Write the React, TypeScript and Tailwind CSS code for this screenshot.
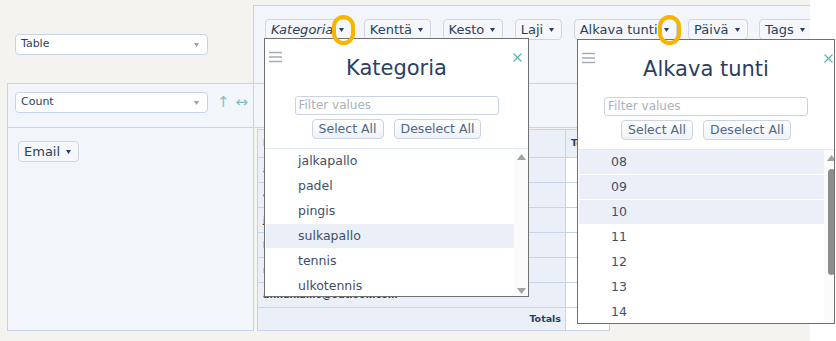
import React from 'react';

const CATEGORIES = ['jalkapallo', 'padel', 'pingis', 'sulkapallo', 'tennis', 'ulkotennis', 'ulkopadel'];
const HOURS = ['08', '09', '10', '11', '12', '13', '14', '15', '16'];
const EMAILS = [
    'aleksi.nieminen@gmail.com',
    'emma.korhonen@gmail.com',
    'juha.makinen@hotmail.com',
    'laura.heikkinen@gmail.com',
    'mikko.laine@outlook.com',
    'anna.kallio@outlook.com',
];
const ATTRS = ['Kenttä', 'Kesto', 'Laji'];

const Tri = ({ className = '', color = '#2a3f5f' }: { className?: string; color?: string }) => (
    <svg width="5" height="4" viewBox="0 0 5 4" className={className}>
        <path d="M0 0h5L2.5 4z" fill={color} />
    </svg>
);

const Chip = ({ label, italic = false }: { label: string; italic?: boolean }) => (
    <span className="inline-flex items-center h-[21px] pl-[5px] pr-[7px] border border-[#cdd7e4] rounded-[4px] bg-[#f5f7fb] text-[13px] text-[#2a3f5f] whitespace-nowrap shrink-0">
        <span className={italic ? 'italic' : ''}>{label}</span>
        <Tri className="ml-[6px]" />
    </span>
);

const Select = ({ value }: { value: string }) => (
    <div className="flex items-center justify-between w-[193px] h-[21px] pl-[5px] pr-[8px] bg-white border border-[#c8d4e3] rounded-[4px] text-[11px] text-[#2a3f5f]">
        <span>{value}</span>
        <Tri color="#9aa3ae" />
    </div>
);

const Hamburger = () => (
    <svg width="14" height="12" viewBox="0 0 14 12">
        <path d="M0 1.5h13M0 6h13M0 10.5h13" stroke="#a3acb9" strokeWidth="1.6" />
    </svg>
);

const Close = () => (
    <svg width="9" height="9" viewBox="0 0 9 9">
        <path d="M0.5 0.5l8 8M8.5 0.5l-8 8" stroke="#5bb5b8" strokeWidth="1.2" />
    </svg>
);

interface FilterBoxProps {
    title: string;
    values: string[];
    selected: string[];
    className: string;
    closeClass: string;
    barWidth: string;
    thumb?: boolean;
}

const FilterBox: React.FC<FilterBoxProps> = ({ title, values, selected, className, closeClass, barWidth, thumb }) => (
    <div className={`absolute flex flex-col bg-white border border-[#707070] ${className}`}>
        <div className="absolute left-[4px] top-[12px]"><Hamburger /></div>
        <div className={`absolute top-[14px] ${closeClass}`}><Close /></div>
        <div className="mt-[13px] text-center text-[21px] leading-[32px] text-[#2a3f5f]">{title}</div>
        <div className="mt-[12px] mx-auto w-[204px] h-[19px] border border-[#c8d4e3] rounded-[3px] pl-[3px] text-[12px] leading-[17px] text-[#a9b1bc] text-left">
            Filter values
        </div>
        <div className="mt-[4px] flex justify-center gap-[10px]">
            <span className="h-[20px] px-[6px] border border-[#c8d4e3] rounded-[4px] bg-gradient-to-b from-white to-[#eef2f8] text-[12.5px] leading-[18px] text-[#506784]">Select All</span>
            <span className="h-[20px] px-[6px] border border-[#c8d4e3] rounded-[4px] bg-gradient-to-b from-white to-[#eef2f8] text-[12.5px] leading-[18px] text-[#506784]">Deselect All</span>
        </div>
        <div className="mt-[9px] flex-1 min-h-0 flex border-t border-[#dfe8f3] overflow-hidden">
            <div className="flex-1 min-w-0 pl-[1px]">
                {values.map((v) => (
                    <div
                        key={v}
                        className={`h-[24px] mb-[1px] pl-[32px] text-[12.5px] leading-[24px] text-[#3f4f68] ${selected.includes(v) ? 'bg-[#ebf0f8]' : ''}`}
                    >
                        {v}
                    </div>
                ))}
            </div>
            <div className={`relative ${barWidth} bg-[#fbfbfb]`}>
                <svg width="9" height="6" viewBox="0 0 9 6" className="absolute top-[5px] left-[3px]">
                    <path d="M0 6L4.5 0L9 6z" fill="#a2a2a2" />
                </svg>
                {thumb ? (
                    <div className="absolute left-[4px] top-[19px] w-[7px] h-[106px] rounded-[4px] bg-[#8d8d8d]" />
                ) : (
                    <svg width="9" height="6" viewBox="0 0 9 6" className="absolute bottom-[2px] left-[3px]">
                        <path d="M0 0L9 0L4.5 6z" fill="#a2a2a2" />
                    </svg>
                )}
            </div>
        </div>
    </div>
);

const Ring = ({ className }: { className: string }) => (
    <div className={`absolute w-[23px] h-[30px] rounded-full border-[4px] border-[#f7b500] ${className}`} />
);

export default function App() {
    return (
        <div className="relative w-[836px] h-[341px] bg-white overflow-hidden font-['DejaVu_Sans','Noto_Sans',sans-serif]">
            <div className="w-[810px] h-[341px] bg-[#f4f3ef] overflow-hidden">
                <div className="grid grid-cols-[246px_557px] grid-rows-[78px_44px_204px] ml-[7px] mt-[5px]">
                    {/* renderer */}
                    <div className="pl-[8px] pt-[29px]">
                        <Select value="Table" />
                    </div>
                    {/* unused attributes */}
                    <div className="flex gap-[11.5px] pl-[11px] pt-[13px] border-l border-t border-[#c8d4e3] bg-[#f2f5fa] overflow-hidden">
                        <Chip label="Kategoria" italic />
                        {ATTRS.map((a) => <Chip key={a} label={a} />)}
                        <Chip label="Alkava tunti" />
                        <Chip label="Päivä" />
                        <Chip label="Tags" />
                    </div>
                    {/* aggregator */}
                    <div className="flex items-start pl-[7px] pt-[8px] border-l border-t border-[#c8d4e3] bg-[#f2f5fa]">
                        <Select value="Count" />
                        <span className="ml-[9px] text-[15px] leading-[21px] text-[#7fc0c6]">↑</span>
                        <span className="ml-[6px] text-[15px] leading-[21px] text-[#7fc0c6]">↔</span>
                    </div>
                    {/* cols */}
                    <div className="border-l border-t border-[#c8d4e3] bg-[#f2f5fa]" />
                    {/* rows */}
                    <div className="pl-[10px] pt-[11px] border-l border-t border-b border-[#c8d4e3] bg-[#f2f5fa]">
                        <Chip label="Email" />
                    </div>
                    {/* output */}
                    <div className="pl-[3px] pt-[1px] border-l border-t border-[#c8d4e3]">
                        <table className="border-collapse text-[9.5px] text-[#2a3f5f]">
                            <thead>
                                <tr className="h-[28px]">
                                    <th className="w-[308px] px-[5px] text-left font-bold bg-[#ebf0f8] border border-[#c8d4e3]">Email</th>
                                    <th className="w-[44px] px-[5px] text-left font-bold bg-[#ebf0f8] border border-[#c8d4e3]">Totals</th>
                                </tr>
                            </thead>
                            <tbody>
                                {EMAILS.map((e, i) => (
                                    <tr key={e} className="h-[25px]">
                                        <th className="px-[5px] text-left font-bold bg-[#ebf0f8] border border-[#c8d4e3]">{e}</th>
                                        <td className="px-[5px] text-right bg-white border border-[#c8d4e3]">{(i % 3) + 1}</td>
                                    </tr>
                                ))}
                                <tr className="h-[23px]">
                                    <th className="px-[4px] text-right font-bold bg-[#ebf0f8] border border-[#c8d4e3]">Totals</th>
                                    <td className="px-[5px] text-right bg-white border border-[#c8d4e3]">12</td>
                                </tr>
                            </tbody>
                        </table>
                    </div>
                </div>
            </div>

            <FilterBox
                title="Kategoria"
                values={CATEGORIES}
                selected={['sulkapallo']}
                className="left-[264px] top-[38px] w-[265px] h-[259px]"
                closeClass="right-[6px]"
                barWidth="w-[14px]"
            />
            <FilterBox
                title="Alkava tunti"
                values={HOURS}
                selected={['08', '09', '10']}
                className="left-[577px] top-[39px] w-[258px] h-[285px]"
                closeClass="right-[1px]"
                barWidth="w-[10px]"
                thumb
            />

            <Ring className="left-[332px] top-[15px]" />
            <Ring className="left-[658px] top-[15px]" />
        </div>
    );
}
